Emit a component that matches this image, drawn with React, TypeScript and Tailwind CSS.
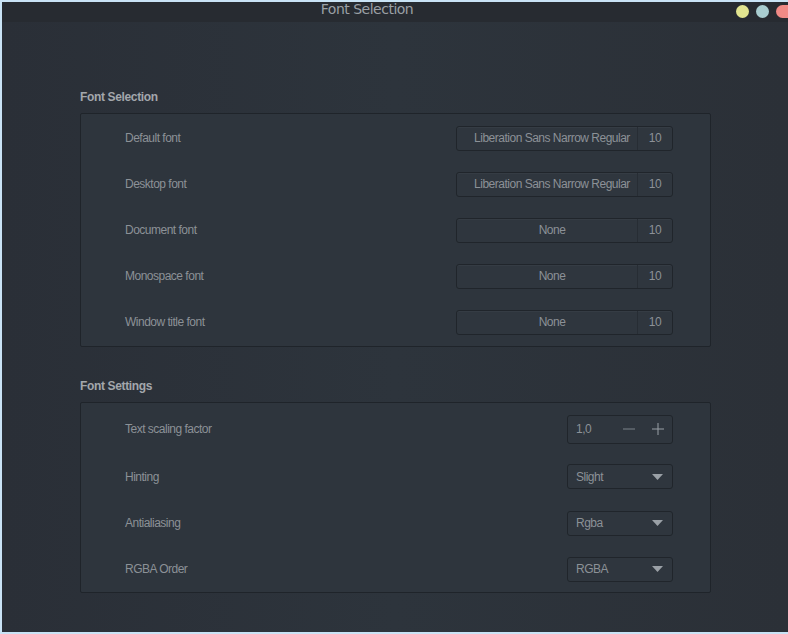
const fontRows = [
  { label: 'Default font', value: 'Liberation Sans Narrow Regular', size: '10' },
  { label: 'Desktop font', value: 'Liberation Sans Narrow Regular', size: '10' },
  { label: 'Document font', value: 'None', size: '10' },
  { label: 'Monospace font', value: 'None', size: '10' },
  { label: 'Window title font', value: 'None', size: '10' },
];

const txt = 'text-[12px] text-[#8c9197] tracking-[-0.5px]';

function FontButton({ value, size }: { value: string; size: string }) {
  return (
    <div className="flex h-[25px] w-[217px] items-stretch rounded-[3px] border border-[#20252b] bg-[#2f363e] shadow-[inset_0_1px_0_rgba(255,255,255,0.03)]">
      <div className={`flex flex-1 items-center justify-center pl-[10px] ${txt}`}>{value}</div>
      <div className="w-px bg-[#272d34]" />
      <div className={`flex w-[34px] items-center justify-center ${txt}`}>{size}</div>
    </div>
  );
}

function Combo({ value }: { value: string }) {
  return (
    <div className="flex h-[25px] w-[106px] items-center justify-between rounded-[3px] border border-[#20252b] bg-[#2f363e] pl-[8px] pr-[9px]">
      <span className={txt}>{value}</span>
      <svg width="11" height="6" viewBox="0 0 11 6">
        <path d="M0 0 L11 0 L5.5 6 Z" fill="#9aa0a6" />
      </svg>
    </div>
  );
}

function Row({ label, children, h }: { label: string; children: React.ReactNode; h: string }) {
  return (
    <div className={`flex items-center justify-between pl-[44px] pr-[37px] ${h}`}>
      <span className={txt}>{label}</span>
      {children}
    </div>
  );
}

export default function App() {
  return (
    <div
      className="flex h-[634px] w-[788px] flex-col bg-[#c9e3f5] pl-[2px] pt-[2px] pb-[2px]"
      style={{ fontFamily: '"Liberation Sans", Arial, sans-serif' }}
    >
      <div className="flex flex-1 flex-col bg-gradient-to-r from-[#2a2f37] via-[#2d343c] to-[#2b3037]">
        {/* title bar */}
        <div className="relative flex h-[20px] items-center justify-center bg-[#272b31] pr-[56px]">
          <span
            className="-mt-[6px] text-[14px] leading-none text-[#9ba0a6]"
            style={{ fontFamily: '"DejaVu Sans", sans-serif', letterSpacing: '-0.5px' }}
          >
            Font Selection
          </span>
          <div className="absolute right-0 top-[3px] flex gap-[7px]">
            <div className="h-[13px] w-[13px] rounded-full bg-[#e2e590]" />
            <div className="h-[13px] w-[13px] rounded-full bg-[#a9cdd0]" />
            <div className="h-[13px] w-[12px] rounded-l-full bg-[#f08a86]" />
          </div>
        </div>

        <div className="flex flex-col pl-[78px] pr-[77px] pt-[66px]">
          <h2 className="mb-[7px] text-[12px] font-bold tracking-[-0.35px] text-[#a3a7ac]">Font Selection</h2>
          <div className="flex flex-col rounded-[2px] border border-[#1f242a] bg-[#2e353d] py-[1px]">
            {fontRows.map((r) => (
              <Row key={r.label} label={r.label} h="h-[46px]">
                <FontButton value={r.value} size={r.size} />
              </Row>
            ))}
          </div>

          <h2 className="mb-[7px] mt-[30px] text-[12px] font-bold tracking-[-0.35px] text-[#a3a7ac]">Font Settings</h2>
          <div className="flex flex-col rounded-[2px] border border-[#1f242a] bg-[#2e353d] pt-[2px]">
            <Row label="Text scaling factor" h="h-[48px]">
              <div className="flex h-[29px] w-[106px] items-center rounded-[3px] border border-[#20252b] bg-[#2f363e] pl-[8px]">
                <span className={`flex-1 ${txt}`}>1,0</span>
                <svg width="12" height="12" viewBox="0 0 12 12" className="mr-[17px]">
                  <path d="M0 6 H12" stroke="#7d838a" strokeWidth="1" />
                </svg>
                <svg width="12" height="12" viewBox="0 0 12 12" className="mr-[8px]">
                  <path d="M6 0 V12 M0 6 H12" stroke="#9aa0a6" strokeWidth="1" />
                </svg>
              </div>
            </Row>
            <Row label="Hinting" h="h-[47px]">
              <Combo value="Slight" />
            </Row>
            <Row label="Antialiasing" h="h-[46px]">
              <Combo value="Rgba" />
            </Row>
            <Row label="RGBA Order" h="h-[46px]">
              <Combo value="RGBA" />
            </Row>
          </div>
        </div>
      </div>
    </div>
  );
}
